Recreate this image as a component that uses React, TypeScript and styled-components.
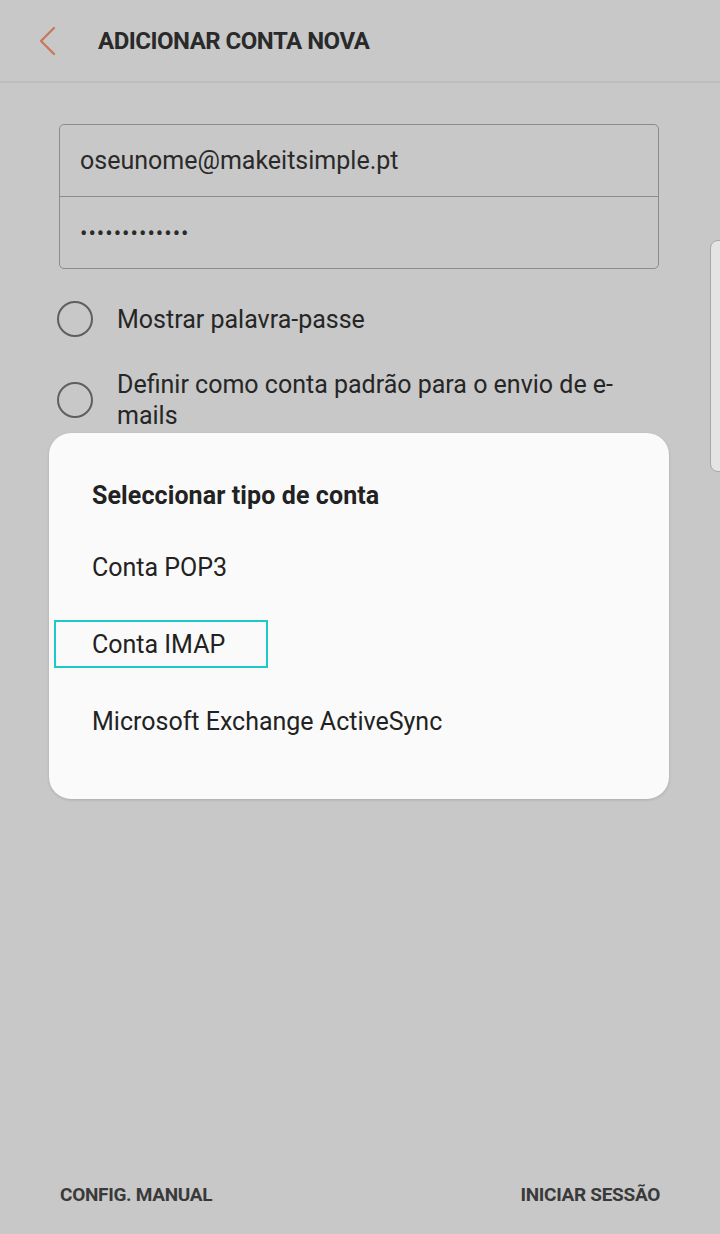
import styled, { createGlobalStyle } from 'styled-components';

const Global = createGlobalStyle`
  html, body {
    margin: 0;
    padding: 0;
    background: #c8c8c8;
  }
  body {
    font-family: Roboto, "Liberation Sans", sans-serif;
    color: #222;
  }
`;

const Screen = styled.div`
  position: relative;
  width: 720px;
  height: 1234px;
  background: #c8c8c8;
  overflow: hidden;
  display: flex;
  flex-direction: column;
`;

const Header = styled.header`
  height: 81px;
  border-bottom: 2px solid #bdbdbd;
  display: flex;
  align-items: center;
  padding-left: 38px;
  gap: 40px;
  box-sizing: content-box;
`;

const BackIcon = styled.svg`
  width: 20px;
  height: 30px;
  flex-shrink: 0;
`;

const Title = styled.h1`
  margin: 0;
  font-size: 24px;
  font-weight: 700;
  letter-spacing: -0.5px;
  color: #2a2a2a;
`;

const Content = styled.div`
  flex: 1;
  padding: 41px 60px 0 59px;
  display: flex;
  flex-direction: column;
`;

const Fields = styled.div`
  width: 600px;
  border: 1px solid #8c8c8c;
  border-radius: 5px;
  box-sizing: border-box;
`;

const Field = styled.div<{ $last?: boolean }>`
  height: ${p => (p.$last ? 71 : 72)}px;
  display: flex;
  align-items: center;
  padding-left: 20px;
  font-size: 25px;
  color: #2a2a2a;
  border-bottom: ${p => (p.$last ? 'none' : '1px solid #8c8c8c')};
  box-sizing: border-box;
`;

const Dots = styled.span`
  font-size: 22px;
  letter-spacing: 1px;
  position: relative;
  top: 1px;
`;

const Options = styled.div`
  margin-top: 32px;
  display: flex;
  flex-direction: column;
  gap: 32px;
  margin-left: -2px;
`;

const Option = styled.div`
  display: flex;
  align-items: center;
  gap: 24px;
`;

const Radio = styled.span`
  width: 32px;
  height: 32px;
  border: 2px solid #5f5f5f;
  border-radius: 50%;
  flex-shrink: 0;
`;

const OptionText = styled.span`
  font-size: 25px;
  line-height: 31px;
  color: #262626;
  width: 505px;
`;

const EdgeTab = styled.div`
  position: absolute;
  right: -10px;
  top: 240px;
  width: 18px;
  height: 230px;
  background: #e4e4e4;
  border: 1px solid #a8a8a8;
  border-radius: 8px;
`;

const Dialog = styled.div`
  position: absolute;
  left: 49px;
  top: 433px;
  width: 620px;
  height: 366px;
  background: #fafafa;
  border-radius: 22px;
  box-shadow: 0 1px 3px rgba(0, 0, 0, 0.15);
  padding: 48px 0 0 43px;
  box-sizing: border-box;
  display: flex;
  flex-direction: column;
`;

const DialogTitle = styled.h2`
  margin: 0 0 32px;
  font-size: 25px;
  font-weight: 700;
  letter-spacing: 0.1px;
  color: #222;
  line-height: 30px;
`;

const Item = styled.div<{ $focused?: boolean }>`
  height: 48px;
  display: flex;
  align-items: center;
  font-size: 25px;
  color: #222;
  margin-bottom: 29px;
  position: relative;
  align-self: flex-start;
  &::after {
    content: '';
    display: ${p => (p.$focused ? 'block' : 'none')};
    position: absolute;
    left: -38px;
    top: 0;
    width: 214px;
    height: 48px;
    border: 2px solid #1ccaca;
    box-sizing: border-box;
  }
`;

const Footer = styled.footer`
  height: 80px;
  display: flex;
  justify-content: space-between;
  align-items: center;
  padding: 0 60px 0 60px;
`;

const FooterButton = styled.span`
  font-size: 19px;
  font-weight: 700;
  letter-spacing: -0.3px;
  color: #3a3a3a;
`;

export default function App() {
  return (
    <Screen>
      <Global />
      <Header>
        <BackIcon viewBox="0 0 20 30">
          <polyline points="16,2 3,15 16,28" fill="none" stroke="#c8795a" strokeWidth="2.4" strokeLinecap="round" strokeLinejoin="round" />
        </BackIcon>
        <Title>ADICIONAR CONTA NOVA</Title>
      </Header>
      <Content>
        <Fields>
          <Field>oseunome@makeitsimple.pt</Field>
          <Field $last>
            <Dots>•••••••••••••</Dots>
          </Field>
        </Fields>
        <Options>
          <Option>
            <Radio />
            <OptionText>Mostrar palavra-passe</OptionText>
          </Option>
          <Option>
            <Radio />
            <OptionText>Definir como conta padrão para o envio de e-mails</OptionText>
          </Option>
        </Options>
      </Content>
      <Footer>
        <FooterButton>CONFIG. MANUAL</FooterButton>
        <FooterButton>INICIAR SESSÃO</FooterButton>
      </Footer>
      <EdgeTab />
      <Dialog>
        <DialogTitle>Seleccionar tipo de conta</DialogTitle>
        <Item>Conta POP3</Item>
        <Item $focused>Conta IMAP</Item>
        <Item>Microsoft Exchange ActiveSync</Item>
      </Dialog>
    </Screen>
  );
}
